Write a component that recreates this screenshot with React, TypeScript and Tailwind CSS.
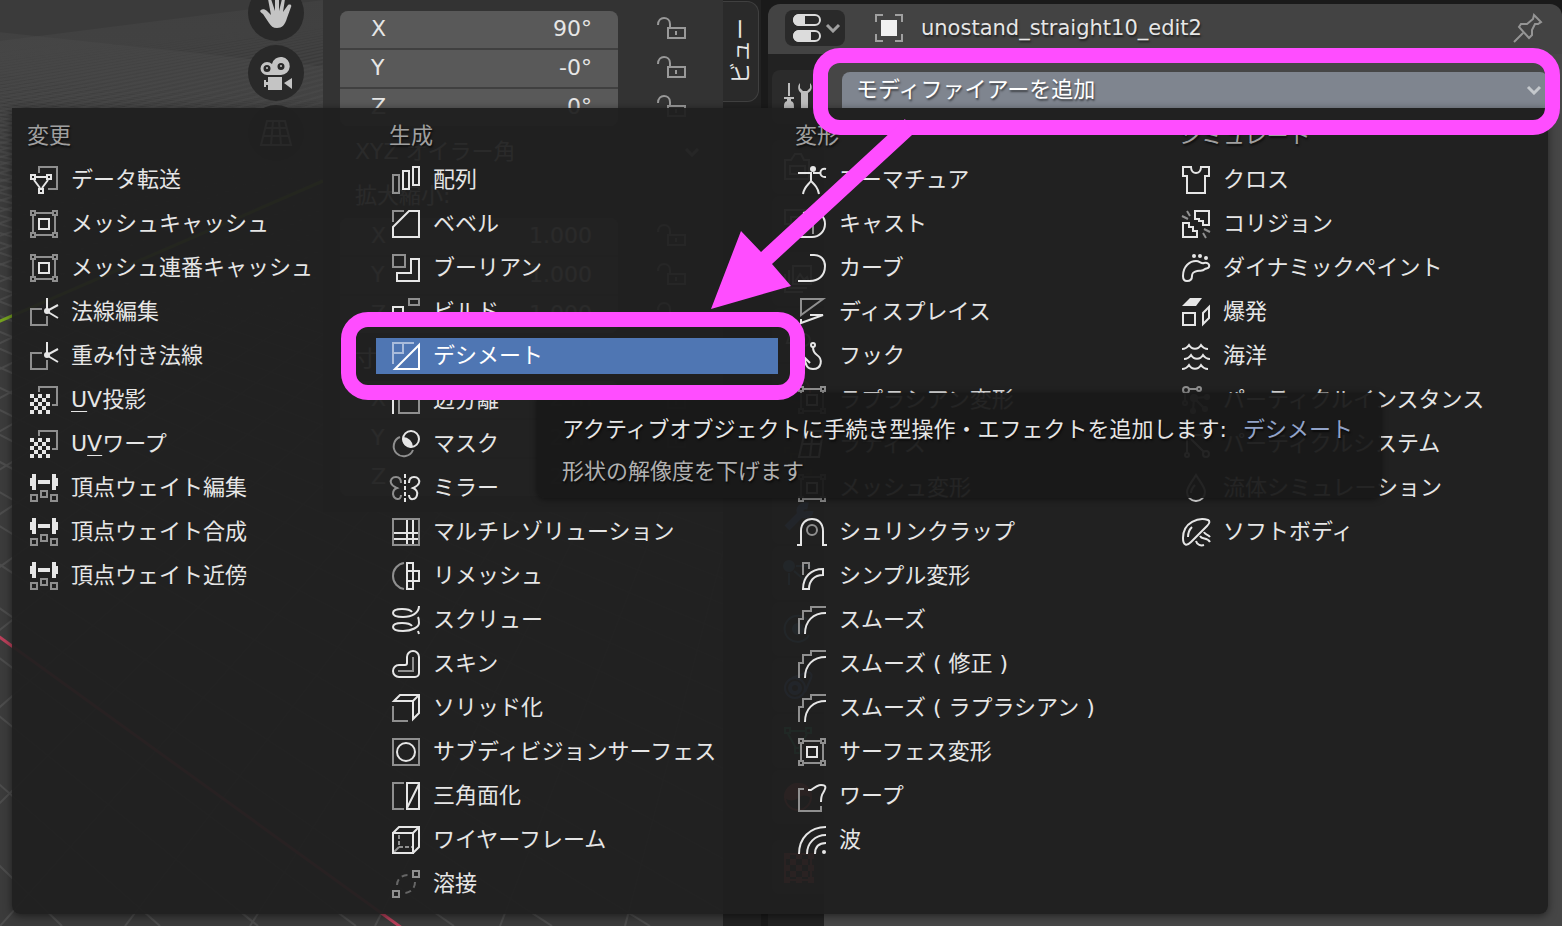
import React from 'react';

interface MenuItem {
  label: React.ReactNode;
  icon: React.ReactNode;
  active?: boolean;
}

interface MenuColumn {
  title: string;
  items: MenuItem[];
}

const DIM = '#8f8f8f';

// Checkerboard squares shared by the UV and texture icons
const checker = (n: number, size: number, top: number) =>
  Array.from({ length: n * n }, (_, i) => ({ x: (i % n) * size, y: top + Math.floor(i / n) * size, on: i % 2 === 0 }))
    .filter(c => c.on)
    .map(c => `M${c.x} ${c.y}h${size}v${size}h-${size}z`)
    .join('');

const Icon: React.FC<{ children: React.ReactNode; className?: string }> = ({ children, className = 'size-7' }) => (
  <svg viewBox="0 0 28 28" fill="none" stroke="currentColor" strokeWidth="2" className={`${className} shrink-0 overflow-visible`} aria-hidden="true">
    {children}
  </svg>
);

const Chevron: React.FC<{ className?: string }> = ({ className = '' }) => (
  <svg viewBox="0 0 16 10" fill="none" stroke="currentColor" strokeWidth="3" className={`h-[10px] w-4 shrink-0 ${className}`} aria-hidden="true">
    <path d="M2 2l6 6 6-6" />
  </svg>
);

const meshCage = (
  <Icon>
    <path stroke={DIM} d="M6 3h16M6 25h16M3 6v16M25 6v16M1 1h4v4H1zM23 1h4v4h-4zM1 23h4v4H1zM23 23h4v4h-4z" />
    <path d="M9 9h10v10H9z" />
  </Icon>
);

const normals = (
  <Icon>
    <path stroke={DIM} d="M12 11H1v16h16v-9" />
    <path d="M17 0v13l11-6M18 14l10 6" />
    <circle cx="17" cy="13" r="3" fill="currentColor" stroke="none" />
  </Icon>
);

const uvChecker = (
  <Icon>
    <path stroke={DIM} d="M9 6V1h18v18h-5" />
    <path fill="currentColor" stroke="none" d={checker(5, 4, 8)} />
  </Icon>
);

const weights = (
  <Icon>
    <path fill="currentColor" stroke="none" d="M0 4h2V0h4v16H2v-4H0zM8 6h12v4H8zM28 4h-2V0h-4v16h4v-4h2z" />
    <path stroke={DIM} d="M1 21h6v6H1zM11 17h6v6h-6zM21 21h6v6h-6z" />
  </Icon>
);

const smooth = (
  <Icon>
    <path stroke={DIM} d="M1 28V13h4V5h8V1h15" />
    <path d="M7 28C7 15 15 7 28 7" />
  </Icon>
);

const columns: MenuColumn[] = [
  {
    title: '変更',
    items: [
      {
        label: 'データ転送',
        icon: (
          <Icon>
            <path stroke={DIM} d="M9 7V1h18v22h-9" />
            <path d="M1 9h4v4H1zM17 9h4v4h-4zM9 23h4v4H9zM6 11h10M4 14l6 8M18 14l-6 8" />
          </Icon>
        ),
      },
      { label: 'メッシュキャッシュ', icon: meshCage },
      { label: 'メッシュ連番キャッシュ', icon: meshCage },
      { label: '法線編集', icon: normals },
      { label: '重み付き法線', icon: normals },
      { label: <><u className="decoration-1 underline-offset-4">U</u>V投影</>, icon: uvChecker },
      { label: <>U<u className="decoration-1 underline-offset-4">V</u>ワープ</>, icon: uvChecker },
      { label: '頂点ウェイト編集', icon: weights },
      { label: '頂点ウェイト合成', icon: weights },
      { label: '頂点ウェイト近傍', icon: weights },
    ],
  },
  {
    title: '生成',
    items: [
      {
        label: '配列',
        icon: (
          <Icon>
            <path stroke={DIM} d="M1 9h6v18H1z" />
            <path d="M11 5h6v18h-6zM21 1h6v18h-6z" />
          </Icon>
        ),
      },
      {
        label: 'ベベル',
        icon: (
          <Icon>
            <path stroke={DIM} d="M12 1H1v11" />
            <path d="M1 27V17L17 1h10v26z" />
          </Icon>
        ),
      },
      {
        label: 'ブーリアン',
        icon: (
          <Icon>
            <path stroke={DIM} d="M1 1h12v12H1z" />
            <path d="M19 5h8v22H5v-8h14z" />
          </Icon>
        ),
      },
      {
        label: 'ビルド',
        icon: (
          <Icon>
            <path stroke={DIM} d="M17 1h10v6H17z" />
            <path d="M1 9h10v8H1zM1 17h26v10H1zM15 17v10" />
          </Icon>
        ),
      },
      {
        label: 'デシメート',
        active: true,
        icon: (
          <Icon>
            <path stroke="#a9bcdb" d="M22 1H1v21M11 1v10H1" />
            <path d="M27 3L3 27h24z" />
          </Icon>
        ),
      },
      {
        label: '辺分離',
        icon: (
          <Icon>
            <path stroke={DIM} d="M7 1h20v26H7z" />
            <path d="M1 0v28" />
          </Icon>
        ),
      },
      {
        label: 'マスク',
        icon: (
          <Icon>
            <path stroke={DIM} d="M8 7A10 10 0 1 0 21 20" />
            <circle cx="19" cy="9" r="8" />
            <path fill="currentColor" stroke="none" d="M11 7A10 10 0 0 1 21 17A8 8 0 0 1 11 7z" />
          </Icon>
        ),
      },
      {
        label: 'ミラー',
        icon: (
          <Icon>
            <path stroke={DIM} d="M9 9C9 5 7 3 4 3C0 3-2 6-1 9C0 12 3 13 5 14C2 15 1 18 1 20C2 26 9 27 9 21" />
            <path strokeDasharray="4 2" d="M13 0v28" />
            <path d="M17 9C17 5 19 3 22 3C26 3 28 6 27 9C26 12 23 13 21 14C24 15 26 18 25 21C24 26 17 27 17 21" />
          </Icon>
        ),
      },
      {
        label: 'マルチレゾリューション',
        icon: (
          <Icon>
            <path stroke={DIM} d="M1 1h26v26H1z" />
            <path d="M15 2v24M21 2v24M2 15h24M2 21h24" />
          </Icon>
        ),
      },
      {
        label: 'リメッシュ',
        icon: (
          <Icon>
            <path stroke={DIM} d="M12 1C6 2 1 7 1 14s5 12 11 13" />
            <path d="M15 1h6v26h-6zM15 9h12v10H15" />
          </Icon>
        ),
      },
      {
        label: 'スクリュー',
        icon: (
          <Icon>
            <path d="M20 6C18 3 13 3 10 3C4 3 1 4 1 7C1 10 5 11 11 11C20 11 27 7 27 0M20 20C18 17 13 17 10 17C4 17 1 18 1 21C1 24 5 25 11 25C20 25 27 21 27 17C27 14 27 13 26 11M26 25l1 3" />
          </Icon>
        ),
      },
      {
        label: 'スキン',
        icon: (
          <Icon>
            <path stroke={DIM} d="M21 7v14H6" />
            <path d="M15 7a6 6 0 0 1 12 0v16a4 4 0 0 1-4 4H7a6 6 0 0 1 0-12h6a2 2 0 0 0 2-2z" />
          </Icon>
        ),
      },
      {
        label: 'ソリッド化',
        icon: (
          <Icon>
            <path stroke={DIM} d="M1 12v15h15" />
            <path d="M2 7l6-6h19v18l-6 6V7zM21 7l6-6" />
          </Icon>
        ),
      },
      {
        label: 'サブディビジョンサーフェス',
        icon: (
          <Icon>
            <path stroke={DIM} d="M1 1h26v26H1z" />
            <circle cx="14" cy="14" r="9" />
          </Icon>
        ),
      },
      {
        label: '三角面化',
        icon: (
          <Icon>
            <path stroke={DIM} d="M12 1H1v26h11" />
            <path d="M15 1h12v26H15zM15 26L27 2" />
          </Icon>
        ),
      },
      {
        label: 'ワイヤーフレーム',
        icon: (
          <Icon>
            <path stroke={DIM} strokeDasharray="4 2" d="M7 9v12h14" />
            <path stroke={DIM} d="M2 26l5-5" />
            <path d="M1 7h20v20H1zM1 7l6-6h20v20l-6 6M21 7l6-6" />
          </Icon>
        ),
      },
      {
        label: '溶接',
        icon: (
          <Icon>
            <path stroke={DIM} d="M21 1h6v6h-6zM1 21h6v6H1z" />
            <path stroke="#666" strokeDasharray="6 4" d="M5 15C5 9 10 5 16 5M23 12C23 19 18 23 12 23" />
          </Icon>
        ),
      },
    ],
  },
  {
    title: '変形',
    items: [
      {
        label: 'アーマチュア',
        icon: (
          <Icon>
            <circle cx="15" cy="3" r="3" fill="currentColor" stroke="none" />
            <path d="M0 7h13v8M13 15C10 19 6 21 5 28M13 15C17 19 20 22 21 28M15 7h7M28 3C21 1 20 12 28 11" />
          </Icon>
        ),
      },
      {
        label: 'キャスト',
        icon: (
          <Icon>
            <path stroke={DIM} d="M15 6v18M1 9v18" />
            <path d="M1 27h13A13 13 0 0 0 14 1L5 3" />
          </Icon>
        ),
      },
      { label: 'カーブ', icon: <Icon><path d="M12 1h4C23 1 27 6 27 12C27 22 20 27 12 27H0" /></Icon> },
      {
        label: 'ディスプレイス',
        icon: (
          <Icon>
            <path stroke={DIM} d="M3 17V1h22z" />
            <path d="M12 17h13L3 25v-4" />
          </Icon>
        ),
      },
      {
        label: 'フック',
        icon: (
          <Icon>
            <circle cx="15" cy="3" r="2" />
            <path d="M15 5c0 4 1 6 4 8 6 4 5 14-4 14-7 0-8-6-8-11l5 5" />
          </Icon>
        ),
      },
      { label: 'ラプラシアン変形', icon: meshCage },
      { label: 'ラティス', icon: <Icon><path d="M7 1h18l-4 26H1zM15 1l-3 26M4 14h19" /></Icon> },
      { label: 'メッシュ変形', icon: meshCage },
      {
        label: 'シュリンクラップ',
        icon: (
          <Icon>
            <circle cx="14" cy="12" r="5" stroke={DIM} />
            <path d="M-1 27h4V13C3 5 8 1 14 1s11 4 11 12v14h4" />
          </Icon>
        ),
      },
      {
        label: 'シンプル変形',
        icon: (
          <Icon>
            <path stroke={DIM} d="M5 13V1h6v6" />
            <path d="M5 27C5 15 13 7 25 7v6C16 13 11 19 11 27z" />
          </Icon>
        ),
      },
      { label: 'スムーズ', icon: smooth },
      { label: 'スムーズ ( 修正 )', icon: smooth },
      { label: 'スムーズ ( ラプラシアン )', icon: smooth },
      { label: 'サーフェス変形', icon: meshCage },
      {
        label: 'ワープ',
        icon: (
          <Icon>
            <path stroke={DIM} d="M6 7H1v22h22v-5" />
            <path d="M10 8h3C17 5 20 3 23 3c6 0 5 3 2 8-2 3-2 5-2 9" />
          </Icon>
        ),
      },
      {
        label: '波',
        icon: (
          <Icon>
            <path d="M1 28C1 12 12 1 28 1M9 28C9 17 17 9 28 9M17 28c0-7 4-11 11-11" />
            <circle cx="26" cy="26" r="2" fill="currentColor" stroke="none" />
          </Icon>
        ),
      },
    ],
  },
  {
    title: 'シミュレート',
    items: [
      { label: 'クロス', icon: <Icon><path d="M9 1H1v9h4v17h18V10h4V1h-8c0 8-10 8-10 0z" /></Icon> },
      {
        label: 'コリジョン',
        icon: (
          <Icon>
            <path stroke={DIM} d="M5 1l3 5M0 6l6 3M22 19l6 3M21 23l3 5" />
            <path d="M13 1h14v14h-6v-4h-4V9h-4zM1 27V13h6v4h4v4h4v6z" />
          </Icon>
        ),
      },
      {
        label: 'ダイナミックペイント',
        icon: (
          <Icon>
            <g fill="currentColor" stroke="none">
              <circle cx="12" cy="2" r="2" />
              <circle cx="18" cy="2" r="2" />
              <circle cx="24" cy="4" r="2" />
            </g>
            <path d="M1 22C1 12 8 7 14 7c4 0 5 3 8 2 3-1 6 1 5 4-1 2-3 1-4 2-3 3-5 1-8 2-4 1-5 2-5 5 0 4-2 5-5 5s-4-2-4-5z" />
          </Icon>
        ),
      },
      {
        label: '爆発',
        icon: (
          <Icon>
            <path fill="currentColor" stroke="none" d="M0 8l8-8h12l-6 8z" />
            <path d="M1 15h12v12H1zM21 15l6-6v11l-6 6z" />
          </Icon>
        ),
      },
      {
        label: '海洋',
        icon: (
          <Icon>
            <path d="M0 7c3 0 5-1 7-4 3 5 9 5 12 0 2 3 4 4 7 4M2 17c3 0 5-1 7-4 3 5 9 5 12 0 2 3 4 4 7 4M0 27c3 0 5-1 7-4 3 5 9 5 12 0 2 3 4 4 7 4" />
          </Icon>
        ),
      },
      {
        label: 'パーティクルインスタンス',
        icon: (
          <Icon>
            <g stroke={DIM}>
              <circle cx="4" cy="4" r="3" />
              <circle cx="17" cy="3" r="2" />
              <circle cx="3" cy="17" r="2" />
              <path d="M7 3h8M3 7v8M12 12l13-1M12 12l-1 13M12 12l11 11" />
            </g>
            <g fill={DIM} stroke="none">
              <circle cx="12" cy="12" r="4" />
              <circle cx="25" cy="11" r="3" />
              <circle cx="11" cy="25" r="3" />
              <circle cx="23" cy="23" r="3" />
            </g>
          </Icon>
        ),
      },
      {
        label: 'パーティクルシステム',
        icon: (
          <Icon>
            <circle cx="5" cy="5" r="4" fill="currentColor" />
            <circle cx="24" cy="5" r="3" />
            <circle cx="5" cy="25" r="2" />
            <circle cx="24" cy="24" r="3" />
            <path d="M10 5h10M5 10v12M9 9l13 13" />
          </Icon>
        ),
      },
      { label: '流体シミュレーション', icon: <Icon><path d="M14 1C10 8 5 13 5 18a9 9 0 0 0 18 0C23 13 18 8 14 1zM9 19c0-3 1-5 4-8" /></Icon> },
      {
        label: 'ソフトボディ',
        icon: (
          <Icon>
            <path d="M26 2C17-1 1 4 1 20c0 8 4 8 8 4L25 8c3-3 3-5 1-6zM6 19c0-4 1-7 4-10" />
            <path d="M22 14c1 3 4 2 6 5M18 18c2 4 7 1 10 6M14 23c1 4 5 5 8 4" />
          </Icon>
        ),
      },
    ],
  },
];

const propertyTabs: { name: string; color: string; icon: React.ReactNode }[][] = [
  [
    {
      name: 'ツール',
      color: 'text-[#bdbdbd]',
      icon: (
        <g fill="currentColor" stroke="none">
          <path d="M4 0h2v13H4zM0 14h10v2H7v2c3 1 3 3 3 8H0c0-5 0-7 3-8v-2H0z" />
          <path d="M16 0c-3 3-2 8 1 10v16h7V10c4-2 5-7 2-10v5l-3 3h-4l-3-3z" />
        </g>
      ),
    },
  ],
  [
    { name: 'レンダー', color: 'text-[#bdbdbd]', icon: <path d="M1 7h6l4-6h6l3 6h5v19H1zM6 13h15v8H6z" /> },
    { name: '出力', color: 'text-[#bdbdbd]', icon: <path d="M1 1h26v14H1zM7 8h14v18H7z" /> },
    { name: 'ビューレイヤー', color: 'text-[#bdbdbd]', icon: <path d="M9 1h18v18H9zM5 5v18h18M1 9v18h18M11 17l5-8 4 6 3-3 2 5" /> },
    { name: 'シーン', color: 'text-[#bdbdbd]', icon: <><path d="M10 1L3 22h14z" /><circle cx="20" cy="19" r="6" /></> },
    { name: 'ワールド', color: 'text-[#d05050]', icon: <><circle cx="14" cy="14" r="12" /><path d="M3 9c8 5 14 5 22 0M3 19c8-5 14-5 22 0" /></> },
  ],
  [
    { name: 'オブジェクト', color: 'text-[#d08040]', icon: <path d="M7 7h14v14H7zM1 6V1h5M22 1h5v5M27 22v5h-5M6 27H1v-5" /> },
    { name: 'モディファイアー', color: 'text-[#5b8fe0]', icon: <path strokeWidth="7" d="M3 25L17 11M24 3c-9-2-11 9-3 9 3 0 5-2 5-4" /> },
    { name: 'パーティクル', color: 'text-[#5b9fd0]', icon: <><circle cx="5" cy="7" r="5" fill="currentColor" /><path d="M5 14v12M12 7h15M10 12l14 12" /></> },
    { name: '物理演算', color: 'text-[#5b9fd0]', icon: <><path d="M25 20A13 13 0 1 1 24 6" /><circle cx="14" cy="14" r="5" fill="currentColor" /></> },
    { name: 'コンストレイント', color: 'text-[#5b8fe0]', icon: <><circle cx="11" cy="17" r="10" /><circle cx="11" cy="17" r="5" strokeWidth="4" /><path d="M8 7L24 1c4 1 4 4 3 6l-6 14" /></> },
    { name: 'データ', color: 'text-[#30c080]', icon: <path d="M1 1h5v5H1zM22 1h5v5h-5zM11 21h5v5h-5zM6 4h16M4 7l8 14M23 7l-8 14" /> },
    { name: 'マテリアル', color: 'text-[#e05050]', icon: <><circle cx="14" cy="14" r="13" /><path fill="currentColor" d="M1 14c4 3 9 3 13 0s9-3 13 0C26 4 20 1 14 1S2 5 1 14z" /></> },
  ],
  [{ name: 'テクスチャ', color: 'text-[#e05050]', icon: <><path d="M1 1h26v26H1z" /><path fill="currentColor" stroke="none" d={checker(5, 6, 0)} /></> }],
];

// Floor grid: two families of lines running to their own vanishing point
const gridLines = (vx: number, step: number, start: number) =>
  Array.from({ length: 90 }, (_, i) => `M${vx} -70L${start + i * step} 926`).join('');

const ViewportGrid = () => (
  <svg viewBox="0 0 723 926" preserveAspectRatio="xMinYMin slice" fill="none" className="absolute inset-0 size-full" aria-hidden="true">
    <defs>
      <linearGradient id="grid-fade" gradientUnits="userSpaceOnUse" x1="0" y1="0" x2="0" y2="400">
        <stop offset="0" stopColor="#4c4c4c" stopOpacity="0.3" />
        <stop offset="1" stopColor="#4c4c4c" />
      </linearGradient>
    </defs>
    <path stroke="url(#grid-fade)" strokeWidth="2" d={gridLines(886, 125, -7000)} />
    <path stroke="url(#grid-fade)" strokeWidth="2" d={gridLines(-970, 98, -330)} />
    <path stroke="#74a01f" strokeWidth="3" d="M-2 322L323 181" />
    <path stroke="#b8405a" strokeWidth="3" d="M-2 636L402 928" />
  </svg>
);

const NavButton: React.FC<{ name: string; children: React.ReactNode }> = ({ name, children }) => (
  <button aria-label={name} className="flex size-14 items-center justify-center rounded-full bg-[#292929] text-[#c4c4c4]">
    <svg viewBox="0 0 32 32" className="size-8 overflow-visible" fill="currentColor">
      {children}
    </svg>
  </button>
);

const VectorFields: React.FC<{ id: string; values: string[] }> = ({ id, values }) => (
  <div className="flex items-start justify-between pr-[37px]">
    <div className="flex w-[278px] flex-col gap-[2px] overflow-hidden rounded-lg bg-[#404040]">
      {['X', 'Y', 'Z'].map((axis, i) => (
        <div key={axis} className="flex h-[37px] items-center justify-between bg-[#595959] pb-[2px] pl-[31px] pr-[26px]">
          <label htmlFor={`${id}-${axis}`}>{axis}</label>
          <input id={`${id}-${axis}`} defaultValue={values[i]} className="w-32 bg-transparent text-right outline-none" />
        </div>
      ))}
    </div>
    <div className="flex flex-col gap-[2px]">
      {['X', 'Y', 'Z'].map(axis => (
        <button key={axis} aria-label={`${axis} ロック`} className="flex h-[37px] items-center pb-1 text-[#999]">
          <svg viewBox="0 0 29 24" className="h-6 w-[29px]" fill="none" stroke="currentColor" strokeWidth="2">
            <path d="M1 9C1 4 4 2 7 2s6 2 6 6v4" />
            <path d="M11 12h17v10H11zM19 15v4" />
          </svg>
        </button>
      ))}
    </div>
  </div>
);

const TransformPanel = () => (
  <section className="flex w-[400px] shrink-0 flex-col self-start bg-[#333333] pb-4 pl-[17px] pt-[11px]">
    <VectorFields id="rotation" values={['90°', '-0°', '0°']} />
    <div className="relative mr-[17px] mt-2 flex h-9 items-center rounded-lg bg-[#2b2b2b]">
      <select aria-label="回転モード" className="w-full appearance-none bg-transparent pl-[15px] outline-none">
        <option>XYZ オイラー角</option>
      </select>
      <Chevron className="absolute right-[6px] text-[#a0a0a0]" />
    </div>
    <h3 className="mt-2 h-9 pl-[15px] leading-9">拡大縮小:</h3>
    <div className="mt-1">
      <VectorFields id="scale" values={['1.000', '1.000', '1.000']} />
    </div>
    <h3 className="mt-2 h-9 pl-[15px] leading-9">寸法:</h3>
    <div className="mt-1">
      <VectorFields id="size" values={['2 m', '2 m', '2 m']} />
    </div>
  </section>
);

const PropertiesEditor = () => (
  <section className="mt-1 flex flex-col overflow-hidden rounded-t-xl bg-[#434343]">
    <header className="flex h-[50px] items-center pb-[2px] pl-[17px] pr-5">
      <button aria-label="エディタータイプ" className="flex h-9 w-[60px] items-center justify-between rounded-lg bg-[#2a2a2a] pl-2 pr-1 text-[#dcdcdc]">
        <Icon>
          <rect x="1" y="1" width="26" height="10" rx="5" />
          <rect x="1" y="17" width="26" height="10" rx="5" />
          <path fill="currentColor" stroke="none" d="M6 0h6v12H6a6 6 0 0 1 0-12zM6 16h12v12H6a6 6 0 0 1 0-12z" />
        </Icon>
        <Chevron className="text-[#a0a0a0]" />
      </button>
      <div className="ml-[30px] flex flex-1 items-center gap-[18px] text-[#e6e6e6]">
        <Icon>
          <path stroke="#a0a0a0" d="M1 8V1h7M20 1h7v7M27 20v7h-7M8 27H1v-7" />
          <path fill="#f0f0f0" stroke="none" d="M6 6h16v16H6z" />
        </Icon>
        <span className="text-[21px] leading-9 [text-shadow:1px_2px_2px_#00000080]">unostand_straight10_edit2</span>
      </div>
      <button aria-label="ピン止め" className="text-[#959595]">
        <Icon>
          <path d="M0 28l9-9M20 1l7 7-3 2-3 0-3 6v5l-3 3L5 13l2-3h6l6-5z" />
        </Icon>
      </button>
    </header>
    <div className="flex flex-1">
      <nav className="flex w-14 shrink-0 flex-col gap-4 bg-[#222222] pl-1 pt-4">
        {propertyTabs.map((group, i) => (
          <div key={i} className="flex flex-col gap-[2px]">
            {group.map(tab => (
              <button key={tab.name} aria-label={tab.name} className={`flex h-[54px] items-center rounded-l-lg bg-[#2b2b2b] pl-3 ${tab.color}`}>
                <Icon>{tab.icon}</Icon>
              </button>
            ))}
          </div>
        ))}
      </nav>
      <div className="flex-1 bg-[#464646] pl-[18px] pr-[14px] pt-[18px]">
        <button aria-haspopup="menu" className="flex h-9 w-full items-center justify-between rounded-t-lg bg-[#7f858f] pl-[14px] pr-[6px] text-white [text-shadow:1px_2px_2px_#00000080]">
          モディファイアーを追加
          <Chevron className="text-[#c4c8cc]" />
        </button>
      </div>
    </div>
  </section>
);

const ModifierMenu = () => (
  <div role="menu" className="absolute left-3 right-[14px] top-[108px] grid grid-cols-[358fr_402fr_380fr_380fr] gap-1 rounded-b-lg bg-[#202020]/95 px-[2px] pb-3 pt-[10px] text-[#e6e6e6] shadow-[0_2px_8px_#00000080] [text-shadow:1px_2px_2px_#00000099]">
    {columns.map(column => (
      <div key={column.title} className="flex min-w-0 flex-col gap-2">
        <h2 className="h-9 whitespace-nowrap pl-[13px] leading-9 text-[#a0a0a0]">{column.title}</h2>
        {column.items.map((item, i) => (
          <button
            key={i}
            role="menuitem"
            className={`flex h-9 items-center gap-[13px] whitespace-nowrap pl-4 text-left ${item.active ? 'bg-[#4f76b3] text-white' : ''}`}
          >
            {item.icon}
            <span>{item.label}</span>
          </button>
        ))}
      </div>
    ))}
  </div>
);

export default function App() {
  return (
    <div className="relative grid min-h-screen grid-cols-[723fr_45px_794fr] overflow-hidden bg-[#1a1a1a] font-['DejaVu_Sans','Noto_Sans_CJK_JP',sans-serif] text-[22px] leading-9 text-[#e6e6e6]">
      {/* 3D viewport */}
      <main className="relative flex justify-end overflow-hidden bg-[#3b3b3b]">
        <ViewportGrid />
        <div className="relative mr-[19px] mt-[-15px] flex flex-col gap-1">
          <NavButton name="視点の移動">
            <path d="M3 17c-2-1-4-3-2-4 1-1 4-1 6 1l4 4L8 2h3l4 12V0h4v14l3-12h3l-2 13 5-7c2-1 4 0 3 2l-4 11c-2 7-5 10-10 10-4 0-6-2-8-5z" />
          </NavButton>
          <NavButton name="カメラビュー">
            <path fillRule="evenodd" d="M7 5a7 7 0 0 1 5 2A9 9 0 1 1 21 18H7A6 6 0 0 1 7 5zM7 8a3 3 0 1 0 0 7 3 3 0 0 0 0-7zM21 6a3 3 0 1 0 0 7 3 3 0 0 0 0-7z" />
            <circle cx="7" cy="11" r="1" />
            <circle cx="21" cy="9" r="1" />
            <path d="M4 23h2v2h2v-5h14v13H8v-5H6v2H4zM24 26l8-5v11z" />
          </NavButton>
          <NavButton name="透視投影">
            <path fill="none" stroke="currentColor" strokeWidth="2" d="M7 4h18l6 24H1zM13 4l-2 24M19 4l2 24M5 11h22M3 19h26" />
          </NavButton>
        </div>
        <div className="relative flex">
          <TransformPanel />
        </div>
      </main>

      {/* Sidebar tabs */}
      <div className="mr-[7px] bg-[#222222]">
        <button className="mt-[1px] flex h-[101px] w-9 items-center justify-center rounded-r-xl border border-l-0 border-[#404040] bg-[#2a2a2a]">
          <span className="rotate-180 [text-orientation:sideways] [writing-mode:vertical-rl]">ビュー</span>
        </button>
      </div>

      <PropertiesEditor />
      <ModifierMenu />

      <div role="tooltip" className="absolute left-[537px] top-[393px] whitespace-nowrap rounded-lg bg-[#191919]/95 pb-[5px] pl-[25px] pr-7 pt-4 leading-[42px] shadow-[0_1px_6px_#00000080] [text-shadow:1px_2px_2px_#00000099]">
        <p>
          アクティブオブジェクトに手続き型操作・エフェクトを追加します:
          <span className="ml-4 text-[#92a3c8]">デシメート</span>
        </p>
        <p className="text-[#b0b0b0]">形状の解像度を下げます</p>
      </div>

      {/* Callouts */}
      <div className="pointer-events-none absolute left-[813px] right-[2px] top-12 h-[87px] rounded-[27px] border-[15px] border-[#ff4dff]" />
      <div className="pointer-events-none absolute left-[341px] top-[312px] h-[88px] w-[464px] rounded-[27px] border-[15px] border-[#ff4dff]" />
      <svg viewBox="0 0 220 190" className="pointer-events-none absolute left-[711px] top-[119px] h-[190px] w-[220px]" fill="#ff4dff" aria-hidden="true">
        <path d="M0 190L30 112L50 133L194 0L201 16L61 145L80 167z" />
      </svg>
    </div>
  );
}
